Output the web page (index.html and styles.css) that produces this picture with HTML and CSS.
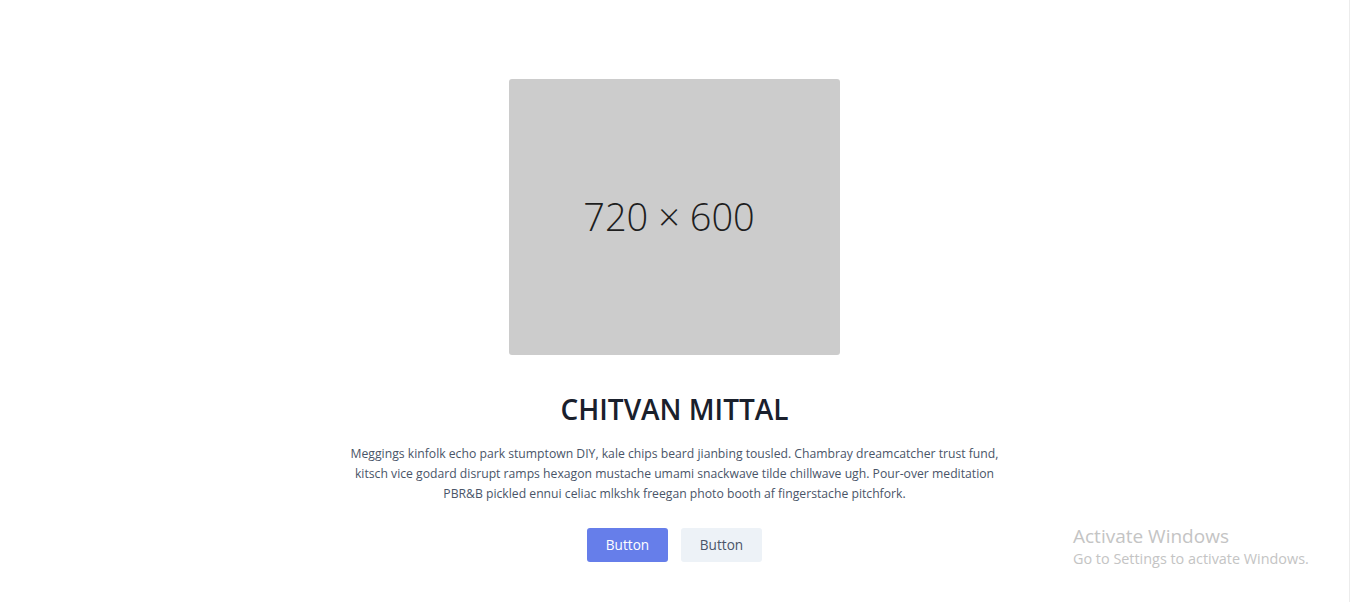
FILE: index.html
```html
<!DOCTYPE html>
<html>
<head>
<meta charset="utf-8">
<link rel="stylesheet" href="styles.css">
</head>
<body>
<div class="page">
  <section class="hero">
    <div class="placeholder"><span>720 × 600</span></div>
    <div class="content">
      <h1 class="title">CHITVAN MITTAL</h1>
      <p class="desc">Meggings kinfolk echo park stumptown DIY, kale chips beard jianbing tousled. Chambray dreamcatcher trust fund, kitsch vice godard disrupt ramps hexagon mustache umami snackwave tilde chillwave ugh. Pour-over meditation PBR&amp;B pickled ennui celiac mlkshk freegan photo booth af fingerstache pitchfork.</p>
      <div class="actions">
        <button class="btn btn-primary">Button</button>
        <button class="btn btn-secondary">Button</button>
      </div>
    </div>
  </section>
  <div class="watermark">
    <div class="wm-title">Activate Windows</div>
    <div class="wm-sub">Go to Settings to activate Windows.</div>
  </div>
</div>
</body>
</html>
```
FILE: styles.css
```css
html, body {
  margin: 0;
  padding: 0;
  background: #ffffff;
}
body {
  font-family: "Open Sans", "Noto Sans", sans-serif;
  overflow: hidden;
}
.page {
  position: relative;
  width: 1349px;
  height: 602px;
  border-right: 1px solid #ececec;
}
.hero {
  display: flex;
  flex-direction: column;
  align-items: center;
  padding-top: 79px;
}
.placeholder {
  width: 331px;
  height: 276px;
  background: #cccccc;
  border-radius: 3px;
  display: flex;
  align-items: center;
  justify-content: center;
}
.placeholder span {
  font-family: "Open Sans", sans-serif;
  font-weight: 300;
  font-size: 38px;
  color: #1e1e1e;
  margin-top: -2px;
  margin-right: 11px;
}
.content {
  width: 661px;
  text-align: center;
  margin-top: 38px;
}
.title {
  margin: 0 0 19px;
  font-size: 28px;
  line-height: 32px;
  font-weight: 600;
  color: #1a202c;
}
.desc {
  margin: 0 0 24px;
  font-size: 12.2px;
  line-height: 20px;
  color: #4a5568;
}
.actions {
  display: flex;
  justify-content: center;
  gap: 13px;
}
.btn {
  border: 0;
  border-radius: 3px;
  width: 81px;
  height: 34px;
  font-family: inherit;
  font-size: 13.6px;
  padding: 0 0 2px;
  cursor: pointer;
}
.btn-primary {
  background: #667eea;
  color: #ffffff;
}
.btn-secondary {
  background: #edf2f7;
  color: #4a5568;
}
.watermark {
  position: absolute;
  left: 1073px;
  top: 523px;
  color: #c4c4c4;
}
.wm-title {
  font-size: 19px;
  line-height: 26px;
}
.wm-sub {
  font-size: 14.4px;
  line-height: 20px;
}
```
